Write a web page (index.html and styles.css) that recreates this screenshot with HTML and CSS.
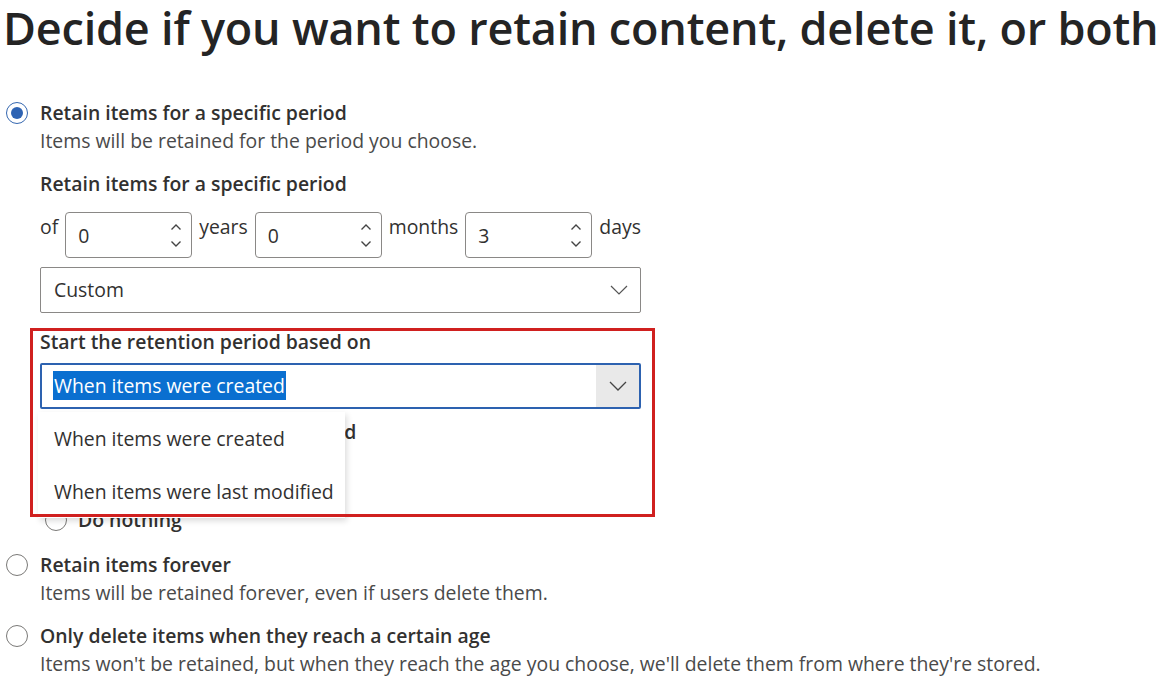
FILE: index.html
```html
<!DOCTYPE html>
<html lang="en">
<head>
    <meta charset="UTF-8">
    <meta name="viewport" content="width=device-width, initial-scale=1.0">
    <title>Retention settings</title>
    <link rel="stylesheet" href="styles.css">
</head>
<body>
    <main class="page">
        <h1 class="title">Decide if you want to retain content, delete it, or both</h1>

        <div class="option option-first">
            <span class="radio is-checked"></span>
            <div class="option-body">
                <div class="option-label">Retain items for a specific period</div>
                <div class="option-desc">Items will be retained for the period you choose.</div>

                <div class="field-label period-label">Retain items for a specific period</div>
                <div class="spin-row">
                    <span class="unit">of</span>
                    <div class="spin">
                        <span class="spin-value">0</span>
                        <span class="spin-arrows">
                            <svg width="12" height="8" viewBox="0 0 12 8"><path d="M1.5 6.5 L6 2 L10.5 6.5" fill="none" stroke="#444" stroke-width="1.4"/></svg>
                            <svg width="12" height="8" viewBox="0 0 12 8"><path d="M1.5 1.5 L6 6 L10.5 1.5" fill="none" stroke="#444" stroke-width="1.4"/></svg>
                        </span>
                    </div>
                    <span class="unit">years</span>
                    <div class="spin">
                        <span class="spin-value">0</span>
                        <span class="spin-arrows">
                            <svg width="12" height="8" viewBox="0 0 12 8"><path d="M1.5 6.5 L6 2 L10.5 6.5" fill="none" stroke="#444" stroke-width="1.4"/></svg>
                            <svg width="12" height="8" viewBox="0 0 12 8"><path d="M1.5 1.5 L6 6 L10.5 1.5" fill="none" stroke="#444" stroke-width="1.4"/></svg>
                        </span>
                    </div>
                    <span class="unit">months</span>
                    <div class="spin">
                        <span class="spin-value">3</span>
                        <span class="spin-arrows">
                            <svg width="12" height="8" viewBox="0 0 12 8"><path d="M1.5 6.5 L6 2 L10.5 6.5" fill="none" stroke="#444" stroke-width="1.4"/></svg>
                            <svg width="12" height="8" viewBox="0 0 12 8"><path d="M1.5 1.5 L6 6 L10.5 1.5" fill="none" stroke="#444" stroke-width="1.4"/></svg>
                        </span>
                    </div>
                    <span class="unit">days</span>
                </div>

                <div class="select select-custom">
                    <span class="select-text">Custom</span>
                    <svg class="chevron" width="18" height="10" viewBox="0 0 18 10"><path d="M1 1 L9 9 L17 1" fill="none" stroke="#555" stroke-width="1.2"/></svg>
                </div>

                <div class="based-on">
                    <div class="field-label">Start the retention period based on</div>
                    <div class="select-wrap">
                        <div class="select is-focused">
                            <span class="select-text"><span class="selected-text">When items were created</span></span>
                            <span class="select-btn">
                                <svg width="18" height="10" viewBox="0 0 18 10"><path d="M1 1 L9 9 L17 1" fill="none" stroke="#444" stroke-width="1.3"/></svg>
                            </span>
                        </div>
                        <ul class="dropdown">
                            <li class="dropdown-item">When items were created</li>
                            <li class="dropdown-item">When items were last modified</li>
                        </ul>
                    </div>
                    <div class="highlight"></div>
                </div>

                <div class="field-label end-label">At the end of the retention period</div>
                <div class="sub-option">
                    <span class="radio"></span>
                    <span class="option-label">Delete items automatically</span>
                </div>
                <div class="sub-option sub-option-last">
                    <span class="radio"></span>
                    <span class="option-label">Do nothing</span>
                </div>
            </div>
        </div>

        <div class="option option-forever">
            <span class="radio"></span>
            <div class="option-body">
                <div class="option-label">Retain items forever</div>
                <div class="option-desc">Items will be retained forever, even if users delete them.</div>
            </div>
        </div>

        <div class="option option-delete">
            <span class="radio"></span>
            <div class="option-body">
                <div class="option-label">Only delete items when they reach a certain age</div>
                <div class="option-desc">Items won't be retained, but when they reach the age you choose, we'll delete them from where they're stored.</div>
            </div>
        </div>
    </main>
</body>
</html>
```

FILE: styles.css
```css
* {
    box-sizing: border-box;
    margin: 0;
    padding: 0;
}

body {
    font-family: 'Open Sans', 'Noto Sans', sans-serif;
    background: #fff;
    color: #323130;
    font-size: 19.4px;
    line-height: 28px;
}

.page {
    padding-left: 3px;
}

.title {
    font-size: 45px;
    line-height: 56px;
    font-weight: 600;
    color: #242424;
    letter-spacing: -0.2px;
    white-space: nowrap;
}

/* radio options */

.option {
    display: flex;
    align-items: flex-start;
    gap: 12px;
    padding-left: 3px;
}

.option-first {
    margin-top: 43px;
}

.option-forever {
    margin-top: 17px;
}

.option-delete {
    margin-top: 15px;
}

.radio {
    flex: none;
    width: 22px;
    height: 22px;
    margin-top: 3px;
    border: 1.5px solid #7a7977;
    border-radius: 50%;
    background: #fff;
    position: relative;
}

.radio.is-checked {
    border-color: #3567b0;
}

.radio.is-checked::after {
    content: '';
    position: absolute;
    left: 3.5px;
    top: 3.5px;
    width: 12px;
    height: 12px;
    border-radius: 50%;
    background: #2e63b3;
}

.option-label,
.field-label {
    font-weight: 600;
    color: #323130;
}

.option-desc {
    color: #4a4a4a;
}

.field-label {
    margin-top: 15px;
}

/* spin buttons */

.spin-row {
    display: flex;
    align-items: flex-start;
    gap: 7px;
    margin-top: 14px;
}

.unit {
    padding-top: 1px;
    color: #323130;
}

.spin {
    display: flex;
    align-items: center;
    justify-content: space-between;
    width: 127px;
    height: 46px;
    padding: 0 9px 0 12px;
    border: 1px solid #8a8886;
    border-radius: 4px;
}

.spin-value {
    padding-top: 2px;
}

.spin-arrows {
    display: flex;
    flex-direction: column;
    gap: 9px;
}

.spin-arrows svg {
    display: block;
}

/* selects */

.select {
    display: flex;
    align-items: center;
    justify-content: space-between;
    width: 601px;
    height: 46px;
    border: 1px solid #8a8886;
    border-radius: 2px;
    background: #fff;
}

.select-custom {
    margin-top: 9px;
    padding: 0 12px 0 13px;
}

.based-on {
    position: relative;
    margin-top: 1px;
}

.based-on .field-label {
    margin-top: 15px;
}

.select-wrap {
    position: relative;
    margin-top: 7px;
}

.select.is-focused {
    border: 2px solid #2d62b0;
    padding-left: 11px;
}

.selected-text {
    background: #0a6fd0;
    color: #fff;
    padding: 1px;
}

.select-btn {
    display: flex;
    align-items: center;
    justify-content: center;
    width: 43px;
    height: 100%;
    background: #e9e9e9;
}

.select-btn svg,
.chevron {
    display: block;
}

/* open list overlays the fields below */

.dropdown {
    position: absolute;
    z-index: 2;
    left: -2px;
    top: 49px;
    width: 307px;
    list-style: none;
    background: #fff;
    box-shadow: 2px 3px 6px rgba(0, 0, 0, 0.14);
}

.dropdown-item {
    height: 53px;
    display: flex;
    align-items: center;
    padding-left: 16px;
    color: #323130;
}

/* annotation frame */

.highlight {
    position: absolute;
    z-index: 3;
    left: -10px;
    top: 0;
    width: 625px;
    height: 189px;
    border: 3px solid #d0201f;
    pointer-events: none;
}

.end-label {
    margin-top: 9px;
}

.sub-option {
    display: flex;
    align-items: flex-start;
    gap: 11px;
    margin-top: 16px;
    padding-left: 5px;
}
```
